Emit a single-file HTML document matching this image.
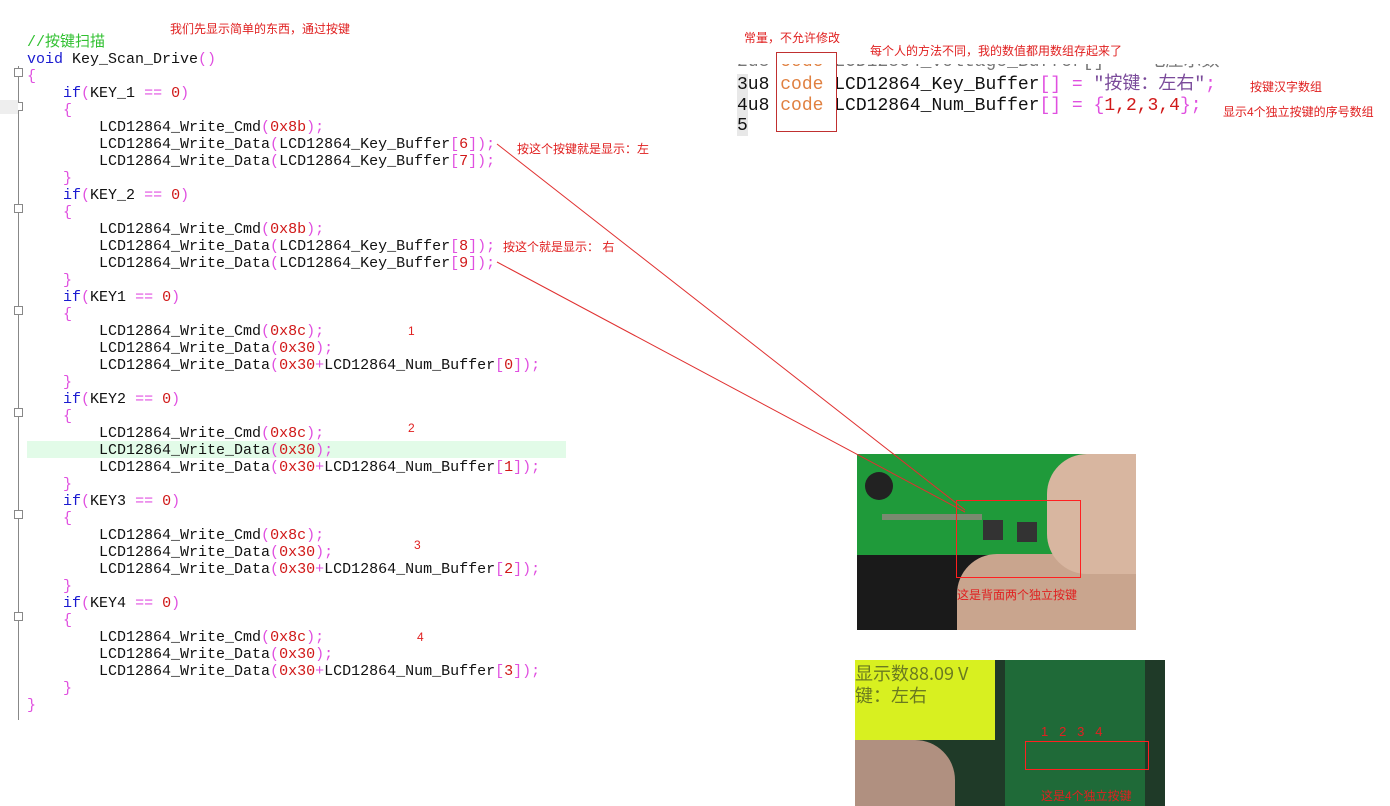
<!DOCTYPE html>
<html><head><meta charset="utf-8"><style>
body{margin:0;width:1390px;height:806px;background:#fff;position:relative;overflow:hidden;font-family:"Liberation Sans","Noto Sans CJK SC",sans-serif}
pre{margin:0;position:absolute;left:27px;top:34px;font:15px/17px "Liberation Mono","Noto Sans CJK SC",monospace;color:#111}
.k{color:#1a1ad0}.p{color:#e050e0}.n{color:#d01818}.c{color:#30c030}.o{color:#e08040}.s{color:#7a4a9a}
.a{position:absolute;color:#e02020;font-size:12px;white-space:nowrap}
.hl{position:absolute;left:27px;top:441px;width:539px;height:17px;background:#e2fbe8}
.g{position:absolute;left:18px;top:66px;width:1px;height:654px;background:#888}
.f{position:absolute;left:14px;width:7px;height:7px;border:1px solid #888;background:#fff}
pre.r{left:737px;font:18px/20.5px "Liberation Mono","Noto Sans CJK SC",monospace}
</style></head><body>
<div class="hl"></div>
<div class="g"></div>
<div class="f" style="top:68px"></div><div class="f" style="top:102px"></div><div class="f" style="top:204px"></div><div class="f" style="top:306px"></div><div class="f" style="top:408px"></div><div class="f" style="top:510px"></div><div class="f" style="top:612px"></div>
<div style="position:absolute;left:0;top:100px;width:18px;height:14px;background:#eee"></div>
<pre><span class="c">//按键扫描</span>
<span class="k">void</span> Key_Scan_Drive<span class="p">()</span>
<span class="p">{</span>
    <span class="k">if</span><span class="p">(</span>KEY_1 <span class="p">==</span> <span class="n">0</span><span class="p">)</span>
    <span class="p">{</span>
        LCD12864_Write_Cmd<span class="p">(</span><span class="n">0x8b</span><span class="p">);</span>
        LCD12864_Write_Data<span class="p">(</span>LCD12864_Key_Buffer<span class="p">[</span><span class="n">6</span><span class="p">]);</span>
        LCD12864_Write_Data<span class="p">(</span>LCD12864_Key_Buffer<span class="p">[</span><span class="n">7</span><span class="p">]);</span>
    <span class="p">}</span>
    <span class="k">if</span><span class="p">(</span>KEY_2 <span class="p">==</span> <span class="n">0</span><span class="p">)</span>
    <span class="p">{</span>
        LCD12864_Write_Cmd<span class="p">(</span><span class="n">0x8b</span><span class="p">);</span>
        LCD12864_Write_Data<span class="p">(</span>LCD12864_Key_Buffer<span class="p">[</span><span class="n">8</span><span class="p">]);</span>
        LCD12864_Write_Data<span class="p">(</span>LCD12864_Key_Buffer<span class="p">[</span><span class="n">9</span><span class="p">]);</span>
    <span class="p">}</span>
    <span class="k">if</span><span class="p">(</span>KEY1 <span class="p">==</span> <span class="n">0</span><span class="p">)</span>
    <span class="p">{</span>
        LCD12864_Write_Cmd<span class="p">(</span><span class="n">0x8c</span><span class="p">);</span>
        LCD12864_Write_Data<span class="p">(</span><span class="n">0x30</span><span class="p">);</span>
        LCD12864_Write_Data<span class="p">(</span><span class="n">0x30</span><span class="p">+</span>LCD12864_Num_Buffer<span class="p">[</span><span class="n">0</span><span class="p">]);</span>
    <span class="p">}</span>
    <span class="k">if</span><span class="p">(</span>KEY2 <span class="p">==</span> <span class="n">0</span><span class="p">)</span>
    <span class="p">{</span>
        LCD12864_Write_Cmd<span class="p">(</span><span class="n">0x8c</span><span class="p">);</span>
        LCD12864_Write_Data<span class="p">(</span><span class="n">0x30</span><span class="p">);</span>
        LCD12864_Write_Data<span class="p">(</span><span class="n">0x30</span><span class="p">+</span>LCD12864_Num_Buffer<span class="p">[</span><span class="n">1</span><span class="p">]);</span>
    <span class="p">}</span>
    <span class="k">if</span><span class="p">(</span>KEY3 <span class="p">==</span> <span class="n">0</span><span class="p">)</span>
    <span class="p">{</span>
        LCD12864_Write_Cmd<span class="p">(</span><span class="n">0x8c</span><span class="p">);</span>
        LCD12864_Write_Data<span class="p">(</span><span class="n">0x30</span><span class="p">);</span>
        LCD12864_Write_Data<span class="p">(</span><span class="n">0x30</span><span class="p">+</span>LCD12864_Num_Buffer<span class="p">[</span><span class="n">2</span><span class="p">]);</span>
    <span class="p">}</span>
    <span class="k">if</span><span class="p">(</span>KEY4 <span class="p">==</span> <span class="n">0</span><span class="p">)</span>
    <span class="p">{</span>
        LCD12864_Write_Cmd<span class="p">(</span><span class="n">0x8c</span><span class="p">);</span>
        LCD12864_Write_Data<span class="p">(</span><span class="n">0x30</span><span class="p">);</span>
        LCD12864_Write_Data<span class="p">(</span><span class="n">0x30</span><span class="p">+</span>LCD12864_Num_Buffer<span class="p">[</span><span class="n">3</span><span class="p">]);</span>
    <span class="p">}</span>
<span class="p">}</span></pre>
<div style="position:absolute;left:737px;top:64px;width:530px;height:9px;overflow:hidden"><pre style="left:0;top:-12px;font:18px/20.5px 'Liberation Mono',monospace;color:#777">2u8 <span class="o">code</span> LCD12864_Voltage_Buffer[] = "电压示数"</pre></div>
<div style="position:absolute;left:737px;top:74px;width:11px;height:62px;background:#e8e8e8"></div>
<pre class="r" style="top:75px">3u8 <span class="o">code</span> LCD12864_Key_Buffer<span class="p">[]</span> <span class="p">=</span> <span class="s">"按键：左右"</span><span class="p">;</span>
4u8 <span class="o">code</span> LCD12864_Num_Buffer<span class="p">[]</span> <span class="p">=</span> <span class="p">{</span><span class="n">1,2,3,4</span><span class="p">}</span><span class="p">;</span>
5</pre>
<div style="position:absolute;left:776px;top:52px;width:59px;height:78px;border:1px solid #c03030"></div>
<div class="a" style="left:170px;top:20px">我们先显示简单的东西，通过按键</div>
<div class="a" style="left:744px;top:29px">常量，不允许修改</div>
<div class="a" style="left:870px;top:42px">每个人的方法不同，我的数值都用数组存起来了</div>
<div class="a" style="left:1250px;top:78px">按键汉字数组</div>
<div class="a" style="left:1223px;top:103px">显示4个独立按键的序号数组</div>
<div class="a" style="left:517px;top:140px">按这个按键就是显示：左</div>
<div class="a" style="left:503px;top:238px">按这个就是显示： 右</div>
<div class="a" style="left:408px;top:324px">1</div>
<div class="a" style="left:408px;top:421px">2</div>
<div class="a" style="left:414px;top:538px">3</div>
<div class="a" style="left:417px;top:630px">4</div>
<div style="position:absolute;left:857px;top:454px;width:279px;height:176px;background:#1a1a1a;overflow:hidden">
<div style="position:absolute;left:0;top:0;width:279px;height:101px;background:#1f9a3a"></div>
<div style="position:absolute;left:100px;top:100px;width:179px;height:76px;background:#c9a58e;border-radius:40px 0 0 0"></div>
<div style="position:absolute;left:190px;top:0;width:89px;height:120px;background:#d8b6a0;border-radius:40px 0 0 40px"></div>
<div style="position:absolute;left:8px;top:18px;width:28px;height:28px;border-radius:50%;background:#222"></div>
<div style="position:absolute;left:126px;top:66px;width:20px;height:20px;background:#333"></div>
<div style="position:absolute;left:160px;top:68px;width:20px;height:20px;background:#333"></div>
<div style="position:absolute;left:25px;top:60px;width:100px;height:6px;background:#7a8a70"></div>
<div style="position:absolute;left:99px;top:46px;width:123px;height:76px;border:1px solid #ff2020"></div>
<div class="a" style="left:100px;top:132px">这是背面两个独立按键</div>
</div>
<div style="position:absolute;left:855px;top:660px;width:310px;height:146px;background:#1f3a28;overflow:hidden">
<div style="position:absolute;left:0;top:0;width:140px;height:80px;background:#d8f020"></div>
<div style="position:absolute;left:0;top:2px;font:18px 'Noto Sans CJK SC';color:#6a7a20;line-height:22px;white-space:pre">显示数88.09 V
键：左右</div>
<div style="position:absolute;left:150px;top:0;width:140px;height:146px;background:#1f6a38"></div>
<div style="position:absolute;left:0;top:80px;width:100px;height:66px;background:#b09080;border-radius:0 40px 0 0"></div>
<div style="position:absolute;left:170px;top:81px;width:122px;height:27px;border:1px solid #ff2020"></div>
<div class="a" style="left:186px;top:64px;font-size:13px">1 &nbsp; 2 &nbsp; 3 &nbsp; 4</div>
<div class="a" style="left:186px;top:127px">这是4个独立按键</div>
</div>
<svg style="position:absolute;left:0;top:0" width="1390" height="806"><line x1="497" y1="144" x2="965" y2="510" stroke="#e03030" stroke-width="1"/><line x1="497" y1="262" x2="965" y2="512" stroke="#e03030" stroke-width="1"/></svg>
</body></html>
